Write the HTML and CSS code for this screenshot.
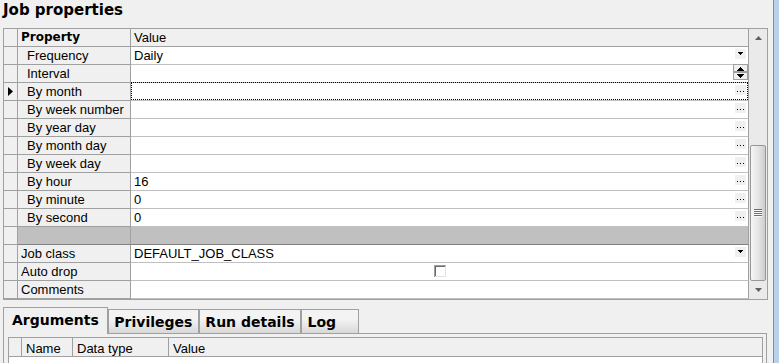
FILE: index.html
```html
<!DOCTYPE html>
<html lang="en">
<head>
  <meta charset="UTF-8" />
  <title>Job properties</title>
  <link rel="stylesheet" href="styles.css">
</head>
<body>
<div class="window">
  <div class="content">
    <h1 class="title">Job properties</h1>

    <!-- Property grid -->
    <div class="props">
      <div class="grid">
        <div class="row head">
          <div class="ind"></div>
          <div class="name">Property</div>
          <div class="val">Value</div>
        </div>
        <div class="row">
          <div class="ind"></div>
          <div class="name sub">Frequency</div>
          <div class="val">
            <span>Daily</span>
            <span class="btn"><svg width="11" height="10" shape-rendering="crispEdges"><rect x="3" y="3" width="5" height="1"/><rect x="4" y="4" width="3" height="1"/><rect x="5" y="5" width="1" height="1"/></svg></span>
          </div>
        </div>
        <div class="row">
          <div class="ind"></div>
          <div class="name sub">Interval</div>
          <div class="val">
            <span class="spin"><svg width="15" height="16" shape-rendering="crispEdges">
              <rect x="0.5" y="0.5" width="14" height="7" fill="#f0f0f0" stroke="#a0a0a0"/>
              <rect x="0.5" y="8.5" width="14" height="7" fill="#f0f0f0" stroke="#a0a0a0"/>
              <rect x="7" y="3" width="1" height="1"/><rect x="6" y="4" width="3" height="1"/><rect x="5" y="5" width="5" height="1"/><rect x="4" y="6" width="7" height="1"/>
              <rect x="4" y="10" width="7" height="1"/><rect x="5" y="11" width="5" height="1"/><rect x="6" y="12" width="3" height="1"/><rect x="7" y="13" width="1" height="1"/>
            </svg></span>
          </div>
        </div>
        <div class="row focus">
          <div class="ind"><svg class="arrow" width="5" height="9"><polygon points="0,0 5,4.5 0,9"/></svg></div>
          <div class="name sub">By month</div>
          <div class="val"><span class="btn"><svg width="11" height="10" shape-rendering="crispEdges"><rect x="2" y="6" width="1" height="1"/><rect x="5" y="6" width="1" height="1"/><rect x="8" y="6" width="1" height="1"/></svg></span></div>
        </div>
        <div class="row">
          <div class="ind"></div>
          <div class="name sub">By week number</div>
          <div class="val"><span class="btn"><svg width="11" height="10" shape-rendering="crispEdges"><rect x="2" y="6" width="1" height="1"/><rect x="5" y="6" width="1" height="1"/><rect x="8" y="6" width="1" height="1"/></svg></span></div>
        </div>
        <div class="row">
          <div class="ind"></div>
          <div class="name sub">By year day</div>
          <div class="val"><span class="btn"><svg width="11" height="10" shape-rendering="crispEdges"><rect x="2" y="6" width="1" height="1"/><rect x="5" y="6" width="1" height="1"/><rect x="8" y="6" width="1" height="1"/></svg></span></div>
        </div>
        <div class="row">
          <div class="ind"></div>
          <div class="name sub">By month day</div>
          <div class="val"><span class="btn"><svg width="11" height="10" shape-rendering="crispEdges"><rect x="2" y="6" width="1" height="1"/><rect x="5" y="6" width="1" height="1"/><rect x="8" y="6" width="1" height="1"/></svg></span></div>
        </div>
        <div class="row">
          <div class="ind"></div>
          <div class="name sub">By week day</div>
          <div class="val"><span class="btn"><svg width="11" height="10" shape-rendering="crispEdges"><rect x="2" y="6" width="1" height="1"/><rect x="5" y="6" width="1" height="1"/><rect x="8" y="6" width="1" height="1"/></svg></span></div>
        </div>
        <div class="row">
          <div class="ind"></div>
          <div class="name sub">By hour</div>
          <div class="val"><span>16</span><span class="btn"><svg width="11" height="10" shape-rendering="crispEdges"><rect x="2" y="6" width="1" height="1"/><rect x="5" y="6" width="1" height="1"/><rect x="8" y="6" width="1" height="1"/></svg></span></div>
        </div>
        <div class="row">
          <div class="ind"></div>
          <div class="name sub">By minute</div>
          <div class="val"><span>0</span><span class="btn"><svg width="11" height="10" shape-rendering="crispEdges"><rect x="2" y="6" width="1" height="1"/><rect x="5" y="6" width="1" height="1"/><rect x="8" y="6" width="1" height="1"/></svg></span></div>
        </div>
        <div class="row">
          <div class="ind"></div>
          <div class="name sub">By second</div>
          <div class="val"><span>0</span><span class="btn"><svg width="11" height="10" shape-rendering="crispEdges"><rect x="2" y="6" width="1" height="1"/><rect x="5" y="6" width="1" height="1"/><rect x="8" y="6" width="1" height="1"/></svg></span></div>
        </div>
        <div class="row blank">
          <div class="ind"></div>
          <div class="name"></div>
          <div class="val"></div>
        </div>
        <div class="row">
          <div class="ind"></div>
          <div class="name">Job class</div>
          <div class="val">
            <span>DEFAULT_JOB_CLASS</span>
            <span class="btn"><svg width="11" height="10" shape-rendering="crispEdges"><rect x="3" y="3" width="5" height="1"/><rect x="4" y="4" width="3" height="1"/><rect x="5" y="5" width="1" height="1"/></svg></span>
          </div>
        </div>
        <div class="row">
          <div class="ind"></div>
          <div class="name">Auto drop</div>
          <div class="val center">
            <svg class="check" width="12" height="12" shape-rendering="crispEdges">
              <rect width="12" height="12" fill="#fff"/>
              <rect width="12" height="1" fill="#a0a0a0"/><rect width="1" height="12" fill="#a0a0a0"/>
              <rect x="1" y="1" width="10" height="1" fill="#696969"/><rect x="1" y="1" width="1" height="10" fill="#696969"/>
              <rect x="1" y="11" width="11" height="1" fill="#e3e3e3"/><rect x="11" y="1" width="1" height="11" fill="#e3e3e3"/>
            </svg>
          </div>
        </div>
        <div class="row">
          <div class="ind"></div>
          <div class="name">Comments</div>
          <div class="val"></div>
        </div>
      </div>

      <!-- Vertical scrollbar -->
      <div class="vscroll">
        <div class="sb-btn"><svg width="7" height="4"><polygon points="0,4 7,4 3.5,0" fill="#606060"/></svg></div>
        <div class="thumb">
          <svg width="8" height="8" shape-rendering="crispEdges">
            <rect y="0" width="8" height="1" fill="#6e6e6e"/><rect y="2" width="8" height="1" fill="#6e6e6e"/>
            <rect y="4" width="8" height="1" fill="#6e6e6e"/><rect y="6" width="8" height="1" fill="#6e6e6e"/>
            <rect y="1" width="8" height="1" fill="#fafafa"/><rect y="3" width="8" height="1" fill="#fafafa"/>
            <rect y="5" width="8" height="1" fill="#fafafa"/><rect y="7" width="8" height="1" fill="#fafafa"/>
          </svg>
        </div>
        <div class="sb-btn down"><svg width="7" height="4"><polygon points="0,0 7,0 3.5,4" fill="#606060"/></svg></div>
      </div>
    </div>

    <!-- Tabs -->
    <div class="tabs">
      <div class="tab active">Arguments</div>
      <div class="tab">Privileges</div>
      <div class="tab">Run details</div>
      <div class="tab log">Log</div>
    </div>
    <div class="panel">
      <div class="args">
        <div class="args-head">
          <div class="a-ind"></div>
          <div class="a-name">Name</div>
          <div class="a-type">Data type</div>
          <div class="a-value">Value</div>
        </div>
      </div>
    </div>
  </div>
  <div class="edge"></div>
</div>
</body>
</html>
```

FILE: styles.css
```css
* {
  box-sizing: border-box;
}

html, body {
  margin: 0;
  height: 100%;
}

body {
  background-color: #f0f0f0;
  color: #000;
  font-family: "Liberation Sans", Arial, sans-serif;
  font-size: 13px;
  overflow: hidden;
}

.window {
  display: flex;
  height: 100vh;
}

.content {
  width: 773px;
  padding-left: 3px;
  display: flex;
  flex-direction: column;
}

.edge {
  flex: 1;
  border-left: 1px solid #8c8c8c;
  background-color: #b9d1ea;
}

.title {
  margin: 0;
  height: 28px;
  padding-top: 1px;
  font-family: "DejaVu Sans", sans-serif;
  font-size: 15px;
  font-weight: bold;
  line-height: 18px;
}

/* property grid */
.props {
  display: flex;
  width: 765px;
  height: 272px;
  border: 1px solid #a0a0a0;
  background-color: #fff;
}

.grid {
  width: 745px;
}

.row {
  display: flex;
  height: 18px;
}

.ind {
  width: 14px;
  background-color: #f0f0f0;
  border-right: 1px solid #a0a0a0;
  border-bottom: 1px solid #a0a0a0;
}

.arrow {
  display: block;
  margin: 4px 0 0 4px;
}

.name {
  width: 113px;
  padding-left: 3px;
  line-height: 17px;
  white-space: nowrap;
  background-color: #f0f0f0;
  border-right: 1px solid #a0a0a0;
  border-bottom: 1px solid #a0a0a0;
}

.name.sub {
  padding-left: 9px;
}

.val {
  position: relative;
  display: flex;
  align-items: flex-start;
  width: 618px;
  padding-left: 3px;
  line-height: 17px;
  white-space: nowrap;
  background-color: #fff;
  border-right: 1px solid #a0a0a0;
  border-bottom: 1px solid #c0c0c0;
}

.val.center {
  justify-content: center;
}

.head .name {
  font-family: "DejaVu Sans", sans-serif;
  font-size: 12px;
  font-weight: bold;
}

.head .val {
  background-color: #f0f0f0;
  border-bottom-color: #a0a0a0;
}

.blank .name,
.blank .val {
  background-color: #c0c0c0;
  border-bottom-color: #808080;
}

.focus .val::after {
  content: "";
  position: absolute;
  top: -1px;
  left: 0;
  right: 0;
  bottom: 0;
  border: 1px dotted #000;
}

.btn {
  display: flex;
  width: 11px;
  height: 10px;
  margin: 2px 2px 0 auto;
  background-color: #f0f0f0;
}

.spin {
  display: flex;
  margin: -1px 0 0 auto;
}

.check {
  margin-top: 2px;
  margin-right: 3px;
}

/* scrollbar */
.vscroll {
  width: 18px;
  display: flex;
  flex-direction: column;
  align-items: center;
  background-color: #eaeaea;
}

.sb-btn {
  width: 100%;
  height: 17px;
  display: flex;
  align-items: center;
  justify-content: center;
}

.sb-btn.down {
  height: 18px;
}

.thumb {
  width: 16px;
  height: 136px;
  margin-top: 99px;
  display: flex;
  align-items: center;
  justify-content: center;
  border: 1px solid #979797;
  border-radius: 2px;
  background: linear-gradient(to right, #f6f6f6, #e4e4e4 55%, #cdcdcd);
}

/* tabs */
.tabs {
  display: flex;
  align-items: flex-end;
  width: 764px;
  height: 27px;
  margin-top: 7px;
  border-bottom: 1px solid #a0a0a0;
}

.tab {
  height: 24px;
  padding: 3px 5.5px 2px;
  border: 1px solid #a0a0a0;
  border-bottom: none;
  background: linear-gradient(#f3f3f3 40%, #d8d8d8);
  font-family: "DejaVu Sans", sans-serif;
  font-size: 14px;
  font-weight: bold;
  line-height: 18px;
  white-space: nowrap;
}

.tab.active {
  height: 27px;
  margin-bottom: -1px;
  padding: 3px 8px 5px;
  background: #f0f0f0;
}

.tab.log {
  width: 58px;
}

.panel {
  flex: 1;
  width: 764px;
  padding: 3px 3px 0 4px;
  border-left: 1px solid #a0a0a0;
  border-right: 1px solid #a0a0a0;
}

.args {
  height: 100%;
  border: 1px solid #a0a0a0;
  border-bottom: none;
  background-color: #fff;
}

.args-head {
  display: flex;
  height: 19px;
  background-color: #f0f0f0;
  border-bottom: 1px solid #a0a0a0;
}

.args-head div {
  padding: 2px 0 0 4px;
  line-height: 17px;
  border-right: 1px solid #a0a0a0;
}

.a-ind {
  width: 13px;
}

.a-name {
  width: 51px;
}

.a-type {
  width: 96px;
}

.args-head .a-value {
  flex: 1;
  border-right: none;
}
```
